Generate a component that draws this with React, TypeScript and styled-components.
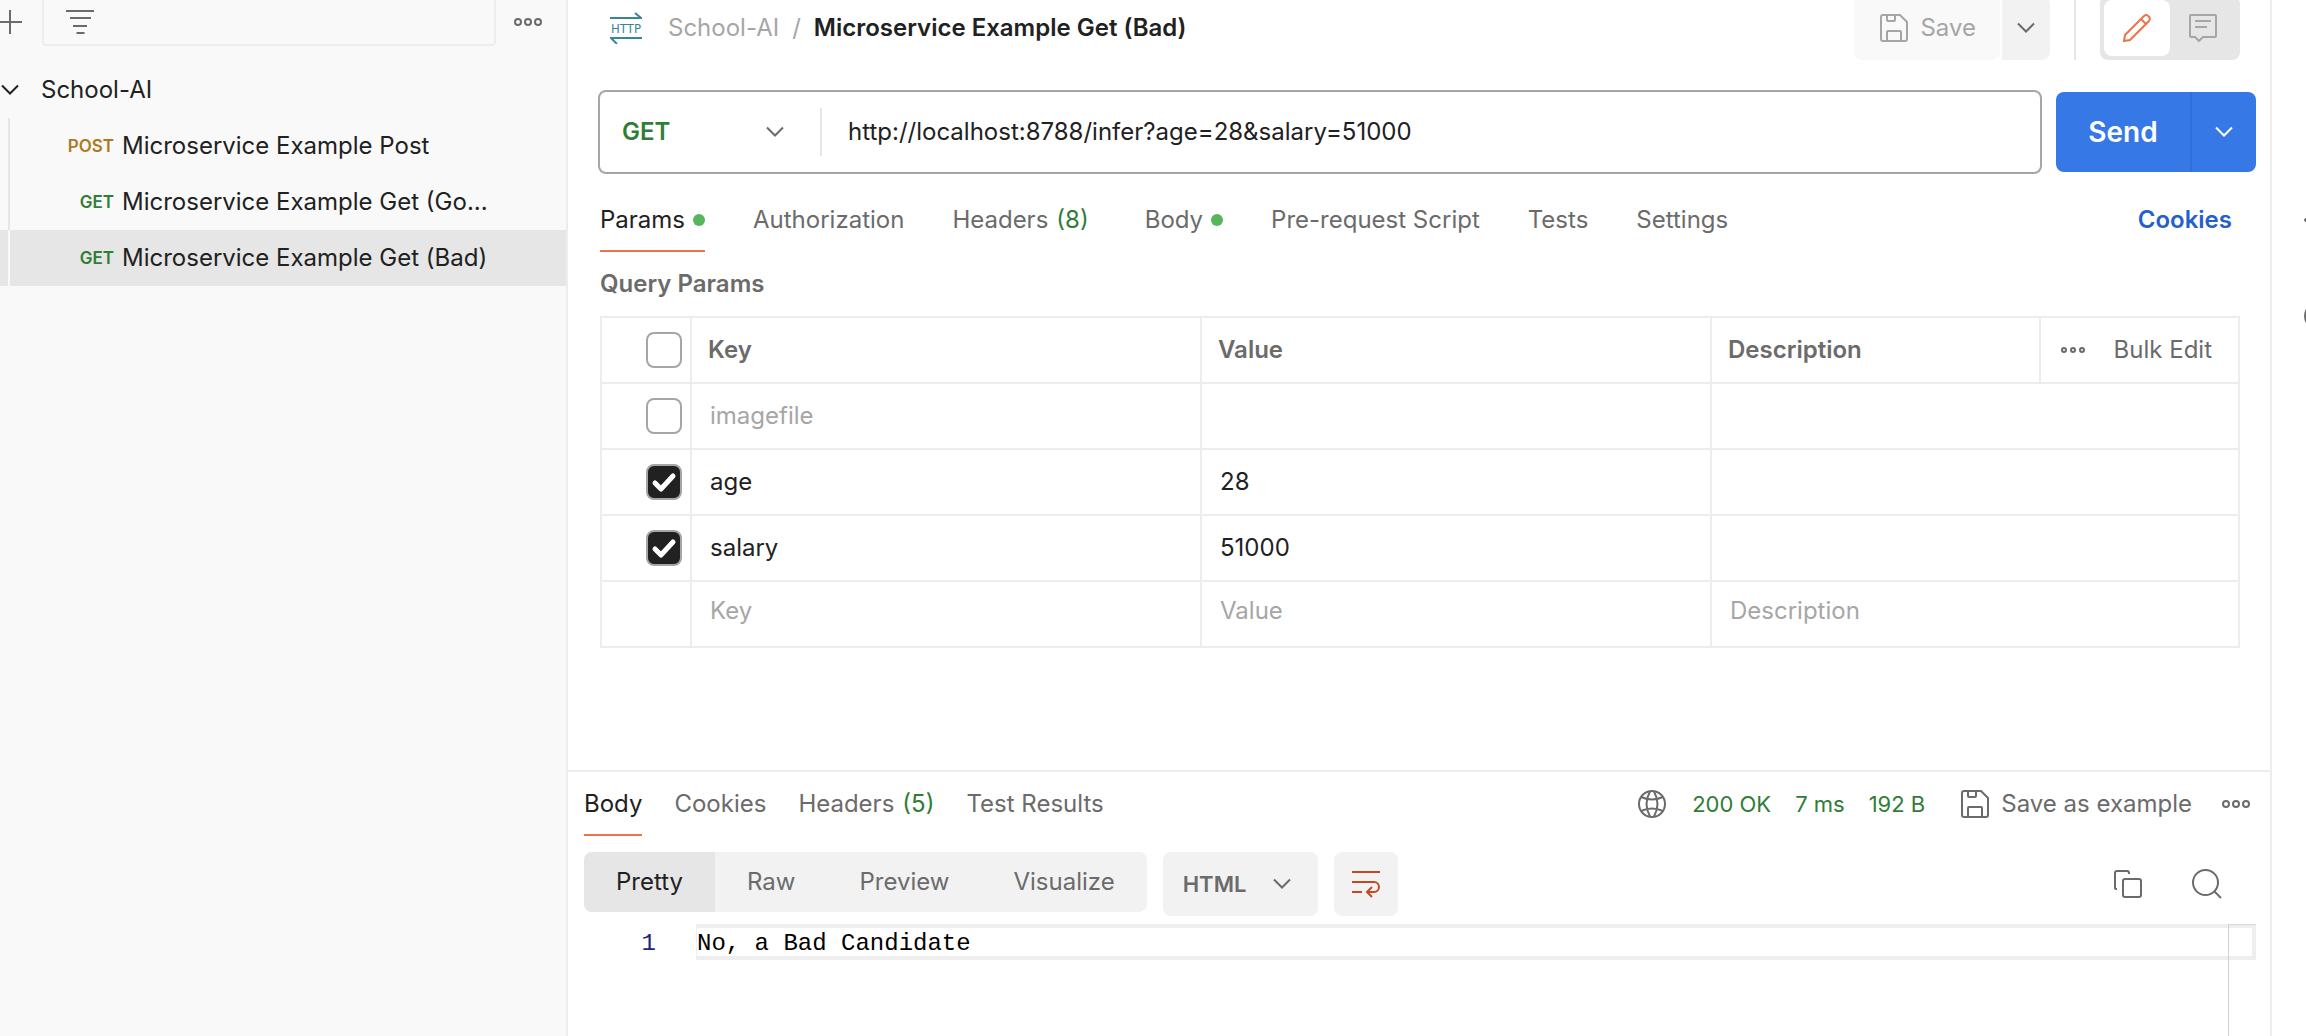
import React, { useState } from "react";
import styled, { createGlobalStyle } from "styled-components";

const color = {
  text: "#212121",
  muted: "#6b6b6b",
  faint: "#a6a6a6",
  line: "#ededed",
  panel: "#f9f9f9",
  soft: "#f2f2f2",
  selected: "#e6e6e6",
  green: "#2f7d36",
  dot: "#56b65c",
  amber: "#ad7a22",
  orange: "#eb7349",
  blue: "#3678e5",
  link: "#265fcb",
};

const GlobalStyle = createGlobalStyle`
  *, *::before, *::after { box-sizing: border-box; }
  body {
    margin: 0;
    background: #fff;
    color: ${color.text};
    font-family: Inter, "Liberation Sans", sans-serif;
    font-size: 24px;
    line-height: 32px;
  }
  button, input, select { font: inherit; color: inherit; }
  button { margin: 0; padding: 0; border: 0; background: none; cursor: pointer; white-space: nowrap; }
  h2 { margin: 0; font-size: inherit; }
`;

/* ---------- icons ---------- */

const Svg = styled.svg`
  display: block;
  flex: none;
  fill: none;
  stroke: currentColor;
  stroke-width: 2;
`;

const Chevron = () => (
  <Svg width="18" height="12" viewBox="0 0 18 12"><path d="M1 1.5l8 8 8-8" /></Svg>
);

const Dots = ({ small = false }: { small?: boolean }) => (
  <Svg width={small ? 24 : 28} height="10" viewBox={small ? "0 0 24 10" : "0 0 28 10"}>
    {(small ? [3, 12, 21] : [4, 14, 24]).map((x) => (
      <circle key={x} cx={x} cy="5" r={small ? 2 : 3} />
    ))}
  </Svg>
);

const PlusIcon = () => (
  <Svg width="24" height="24" viewBox="0 0 24 24"><path d="M12 0v24M0 12h24" /></Svg>
);

const FilterIcon = () => (
  <Svg width="28" height="24" viewBox="0 0 28 24"><path d="M0 1h28M4 8h21M7 16h14M10.500 23h8" /></Svg>
);

const HttpIcon = () => (
  <Svg width="32" height="32" viewBox="0 0 32 32">
    <path d="M0 6h31l-6-5M32 26H1l6 6" />
    <text
      x="16"
      y="21"
      textAnchor="middle"
      fontSize="13"
      fontFamily="'DejaVu Sans Condensed', 'Liberation Sans Narrow', sans-serif"
      fill="currentColor"
      stroke="none"
    >
      HTTP
    </text>
  </Svg>
);

const SaveIcon = () => (
  <Svg width="28" height="28" viewBox="0 0 28 28">
    <path d="M3 1h17l7 7v17a2 2 0 0 1-2 2H3a2 2 0 0 1-2-2V3a2 2 0 0 1 2-2z" />
    <path d="M7 1v5q0 1 1 1h6q1 0 1-1V1M7 27V18q0-1 1-1h12q1 0 1 1v9" />
  </Svg>
);

const PencilIcon = () => (
  <Svg width="28" height="28" viewBox="0 0 28 28">
    <path d="M1 27l1-6L21 2q2.500-2 4.600.300 2.200 2.200.400 4.700L7 26zM18 5l5 5" />
  </Svg>
);

const CommentIcon = () => (
  <Svg width="28" height="28" viewBox="0 0 28 28">
    <path d="M2 1h24q1 0 1 1v20q0 1-1 1H14l-4 4-4-4H2q-1 0-1-1V2q0-1 1-1zM6 7h16M6 13h12" />
  </Svg>
);

const GlobeIcon = () => (
  <Svg width="28" height="28" viewBox="0 0 28 28">
    <circle cx="14" cy="14" r="13" />
    <path d="M12 1.500Q5 14 12 26.500M16 1.500Q23 14 16 26.500M3 7q11 5 22 0M3 21q11-5 22 0" />
  </Svg>
);

const WrapIcon = () => (
  <Svg width="28" height="28" viewBox="0 0 28 28">
    <path d="M0 2h28M0 12h22a5 5 0 0 1 0 10H15M20 17l-5 5 5 5M0 22h10" />
  </Svg>
);

const CopyIcon = () => (
  <Svg width="28" height="28" viewBox="0 0 28 28">
    <path d="M3 19H2q-1 0-1-1V3q0-2 2-2h10q2 0 2 2v1" />
    <rect x="9" y="9" width="18" height="18" rx="2" />
  </Svg>
);

const SearchIcon = () => (
  <Svg width="30" height="30" viewBox="0 0 30 30">
    <circle cx="13.500" cy="13.500" r="12.500" />
    <path d="M22 22l7 7" />
  </Svg>
);

/* ---------- shell ---------- */

const Shell = styled.div`
  display: flex;
  min-height: 100vh;
  overflow: hidden;
`;

const Sidebar = styled.aside`
  flex: none;
  width: 568px;
  background: ${color.panel};
  border-right: 2px solid ${color.line};
`;

const SidebarTools = styled.div`
  display: flex;
  align-items: flex-end;
  height: 46px;
  color: ${color.muted};
`;

const ToolButton = styled.button<{ $width: number; $shift?: boolean }>`
  display: flex;
  flex: none;
  align-items: center;
  justify-content: ${(p) => (p.$shift ? "flex-end" : "center")};
  width: ${(p) => p.$width}px;
  height: 48px;
  padding-right: ${(p) => (p.$shift ? 20 : 6)}px;
`;

const FilterBox = styled.label`
  display: flex;
  flex: 1;
  min-width: 0;
  align-items: center;
  gap: 12px;
  height: 52px;
  padding: 4px 22px 0;
  border: 2px solid ${color.line};
  border-radius: 4px;
`;

const FilterInput = styled.input`
  flex: 1;
  min-width: 0;
  border: 0;
  outline: 0;
  background: none;
`;

const Folder = styled.button`
  display: flex;
  align-items: center;
  gap: 22px;
  width: 100%;
  height: 56px;
  margin-top: 16px;
  padding-left: 1px;
  text-align: left;
`;

const RequestList = styled.nav`
  display: flex;
  flex-direction: column;
`;

const RequestLink = styled.a<{ $active?: boolean }>`
  display: flex;
  align-items: center;
  gap: 8px;
  height: 56px;
  padding-right: 76px;
  color: inherit;
  text-decoration: none;
  background: ${(p) => (p.$active ? color.selected : "none")};

  &::before {
    content: "";
    align-self: stretch;
    width: 2px;
    margin-left: 8px;
    background: ${(p) => (p.$active ? color.panel : color.selected)};
  }
`;

const Verb = styled.span<{ $post?: boolean }>`
  flex: none;
  width: 96px;
  text-align: right;
  font-size: 17px;
  font-weight: 600;
  color: ${(p) => (p.$post ? color.amber : color.green)};
`;

const RequestName = styled.span`
  overflow: hidden;
  text-overflow: ellipsis;
  white-space: nowrap;
`;

const Main = styled.main`
  display: flex;
  flex: 1;
  flex-direction: column;
  min-width: 0;
  border-right: 2px solid ${color.line};
`;

const RightRail = styled.aside`
  display: flex;
  flex: none;
  flex-direction: column;
  align-items: flex-start;
  gap: 74px;
  width: 34px;
  padding: 212px 0 0 32px;
  overflow: hidden;
  color: ${color.muted};
`;

/* ---------- request ---------- */

const TitleBar = styled.header`
  display: flex;
  align-items: center;
  height: 64px;
  margin-top: -4px;
  padding: 0 30px 0 42px;
`;

const Crumbs = styled.div`
  display: flex;
  flex: 1;
  align-items: center;
  gap: 13px;
  color: ${color.faint};

  svg { margin-right: 13px; color: #3b8496; }
`;

const Title = styled.strong`
  font-weight: 600;
  color: ${color.text};
`;

const SaveButton = styled.button`
  display: flex;
  align-items: center;
  gap: 12px;
  height: 64px;
  padding: 0 24px 0 26px;
  border-radius: 8px;
  background: ${color.panel};
  color: ${color.faint};
`;

const SaveMenu = styled.button`
  display: flex;
  align-items: center;
  justify-content: center;
  width: 48px;
  height: 64px;
  margin-left: 2px;
  border-radius: 0 8px 8px 0;
  background: ${color.soft};
  color: ${color.muted};
`;

const Divider = styled.span`
  width: 2px;
  height: 64px;
  margin: 0 24px;
  background: ${color.selected};
`;

const ModeSwitch = styled.div`
  display: flex;
  width: 140px;
  height: 64px;
  padding: 4px;
  border-radius: 8px;
  background: ${color.selected};
`;

const ModeButton = styled.button<{ $active?: boolean }>`
  display: flex;
  flex: 1;
  align-items: center;
  justify-content: center;
  border-radius: 8px;
  background: ${(p) => (p.$active ? "#fff" : "none")};
  color: ${(p) => (p.$active ? color.orange : color.faint)};
`;

const UrlRow = styled.div`
  display: flex;
  align-items: center;
  gap: 14px;
  margin-top: 30px;
  padding: 0 14px 0 30px;
`;

const UrlBox = styled.div`
  display: flex;
  flex: 1;
  align-items: center;
  height: 84px;
  min-width: 0;
  border: 2px solid ${color.faint};
  border-radius: 8px;
`;

const SelectWrap = styled.div`
  display: flex;
  position: relative;
  align-items: center;
  color: ${color.muted};

  svg { position: absolute; right: 38px; pointer-events: none; }
`;

const MethodSelect = styled.select`
  appearance: none;
  width: 222px;
  height: 48px;
  padding: 0 22px;
  border: 0;
  border-right: 2px solid ${color.selected};
  outline: 0;
  background: none;
  color: ${color.green};
  font-weight: 600;
`;

const UrlInput = styled.input`
  flex: 1;
  min-width: 0;
  padding: 0 26px;
  border: 0;
  outline: 0;
  background: none;
`;

const SendGroup = styled.div`
  display: flex;
  height: 80px;
  border-radius: 8px;
  overflow: hidden;
  background: ${color.blue};
  color: #fff;
`;

const SendButton = styled.button`
  width: 134px;
  font-size: 28px;
  font-weight: 600;
`;

const SendMenu = styled.button`
  display: flex;
  align-items: center;
  justify-content: center;
  width: 66px;
  border-left: 2px solid #306fd8;
`;

const TabRow = styled.div<{ $response?: boolean }>`
  display: flex;
  align-items: center;
  gap: ${(p) => (p.$response ? 32 : 48)}px;
  height: 64px;
  margin-top: ${(p) => (p.$response ? 0 : 14)}px;
  padding: ${(p) => (p.$response ? "0 20px 0 16px" : "0 38px 0 32px")};
`;

const Tab = styled.button<{ $active?: boolean }>`
  display: flex;
  align-items: center;
  align-self: stretch;
  gap: 8px;
  padding-top: 2px;
  border-bottom: 2px solid ${(p) => (p.$active ? color.orange : "transparent")};
  color: ${(p) => (p.$active ? color.text : color.muted)};
`;

const Count = styled.span<{ $wide?: boolean }>`
  margin-right: ${(p) => (p.$wide ? 8 : 0)}px;
  color: ${color.green};
`;

const Dot = styled.i`
  width: 12px;
  height: 12px;
  border-radius: 50%;
  background: ${color.dot};
`;

const CookiesLink = styled.a`
  margin-left: auto;
  color: ${color.link};
  font-weight: 600;
  text-decoration: none;
`;

const Params = styled.section`
  flex: none;
  padding: 16px 30px 122px 32px;
`;

const ParamsTitle = styled.h2`
  margin-bottom: 16px;
  font-weight: 600;
  color: ${color.muted};
`;

const ParamTable = styled.table`
  width: 100%;
  table-layout: fixed;
  border-collapse: separate;
  border-spacing: 0;
  border-top: 2px solid ${color.line};
  border-left: 2px solid ${color.line};

  th, td {
    height: 66px;
    padding: 0 16px;
    border-right: 2px solid ${color.line};
    border-bottom: 2px solid ${color.line};
    text-align: left;
    white-space: nowrap;
  }
  th { color: ${color.muted}; font-weight: 600; }
`;

const CheckCell = styled.td`
  && { padding: 0 0 0 44px; }
`;

const Check = styled.input`
  display: block;
  appearance: none;
  width: 36px;
  height: 36px;
  margin: 0;
  border: 2px solid ${color.faint};
  border-radius: 8px;
  background: #fff center / 28px 28px no-repeat;

  &:checked {
    background-color: ${color.text};
    background-image: url("data:image/svg+xml,%3Csvg xmlns='http://www.w3.org/2000/svg' viewBox='0 0 28 28' fill='none' stroke='white' stroke-width='5' stroke-linecap='round' stroke-linejoin='round'%3E%3Cpath d='M5 15l6 6L23 8'/%3E%3C/svg%3E");
  }
`;

const CellInput = styled.input<{ $off?: boolean }>`
  display: block;
  width: 100%;
  height: 32px;
  padding: 0 2px;
  border: 0;
  outline: 0;
  background: none;
  color: ${(p) => (p.$off ? color.faint : color.text)};

  &::placeholder { color: ${color.faint}; opacity: 1; }
`;

const BlankRow = styled.tr`
  td { padding-bottom: 6px; }
`;

const BulkTools = styled.div`
  display: flex;
  align-items: center;
  justify-content: space-between;
  padding: 0 10px 0 4px;
  font-weight: 400;
`;

/* ---------- response ---------- */

const Response = styled.section`
  display: flex;
  flex: 1;
  flex-direction: column;
  border-top: 2px solid ${color.line};
`;

const Status = styled.div`
  display: flex;
  align-items: center;
  gap: 24px;
  margin-left: auto;
  color: ${color.green};
  font-size: 22px;

  svg { color: ${color.muted}; }
  > svg { margin-right: 2px; }
`;

const SaveExample = styled.button`
  display: flex;
  align-items: center;
  gap: 12px;
  margin-left: 12px;
  margin-right: 6px;
  color: ${color.muted};
  font-size: 24px;
`;

const ViewBar = styled.div`
  display: flex;
  align-items: flex-start;
  gap: 16px;
  padding: 16px 48px 8px 16px;
`;

const Segments = styled.div`
  display: flex;
  height: 60px;
  border-radius: 8px;
  overflow: hidden;
  background: ${color.soft};
`;

const Segment = styled.button<{ $active?: boolean }>`
  padding: 0 32px;
  background: ${(p) => (p.$active ? color.selected : "none")};
  color: ${(p) => (p.$active ? color.text : color.muted)};
`;

const FormatWrap = styled(SelectWrap)`
  svg { right: 27px; }
`;

const FormatSelect = styled.select`
  appearance: none;
  width: 155px;
  height: 64px;
  padding: 0 20px;
  border: 0;
  border-radius: 8px;
  outline: 0;
  background: ${color.soft};
  color: ${color.muted};
  font-size: 22px;
  font-weight: 600;
`;

const WrapButton = styled.button`
  display: flex;
  align-items: center;
  justify-content: center;
  width: 64px;
  height: 64px;
  border-radius: 8px;
  background: ${color.soft};
  color: #c04a22;
`;

const ViewTools = styled.div`
  display: flex;
  align-items: center;
  gap: 50px;
  height: 64px;
  margin-left: auto;
  color: ${color.muted};
`;

const Editor = styled.div`
  display: flex;
  flex: 1;
  padding-right: 14px;
  font-family: "Liberation Mono", monospace;
  line-height: 36px;
`;

const Gutter = styled.div`
  width: 88px;
  margin-right: 40px;
  padding-top: 2px;
  text-align: right;
  color: #1c2674;
`;

const Code = styled.div`
  position: relative;
  flex: 1;

  /* scroll ruler drawn over the right end of the text area */
  &::after {
    content: "";
    position: absolute;
    inset: 0 0 0 auto;
    width: 28px;
    border-top: 1px solid #d8d8d8;
    border-left: 1px solid #d0d0d0;
  }
`;

const CodeLine = styled.pre`
  height: 36px;
  margin: 0;
  padding-top: 2px;
  border: 4px solid #eee;
  border-left-width: 1px;
  color: #000;
  font: inherit;
  line-height: 28px;
`;

const requests = [
  { verb: "POST", name: "Microservice Example Post" },
  { verb: "GET", name: "Microservice Example Get (Go..." },
  { verb: "GET", name: "Microservice Example Get (Bad)" },
];

const initialParams = [
  { on: false, key: "imagefile", value: "" },
  { on: true, key: "age", value: "28" },
  { on: true, key: "salary", value: "51000" },
];

export default function App() {
  const [params, setParams] = useState(initialParams);
  const [view, setView] = useState("Pretty");

  const setRow = (i: number, on: boolean) =>
    setParams(params.map((p, n) => (n === i ? { ...p, on } : p)));

  return (
    <>
      <GlobalStyle />
      <Shell>
        <Sidebar>
          <SidebarTools>
            <ToolButton $width={42} $shift aria-label="New"><PlusIcon /></ToolButton>
            <FilterBox>
              <FilterIcon />
              <FilterInput aria-label="Filter collections" />
            </FilterBox>
            <ToolButton $width={70} aria-label="More"><Dots /></ToolButton>
          </SidebarTools>
          <Folder><Chevron />School-AI</Folder>
          <RequestList>
            {requests.map((r, i) => (
              <RequestLink key={r.name} href="#" $active={i === 2}>
                <Verb $post={r.verb === "POST"}>{r.verb}</Verb>
                <RequestName>{r.name}</RequestName>
              </RequestLink>
            ))}
          </RequestList>
        </Sidebar>

        <Main>
          <TitleBar>
            <Crumbs>
              <HttpIcon />
              <span>School-AI</span>
              <span>/</span>
              <Title>Microservice Example Get (Bad)</Title>
            </Crumbs>
            <SaveButton><SaveIcon />Save</SaveButton>
            <SaveMenu aria-label="Save options"><Chevron /></SaveMenu>
            <Divider />
            <ModeSwitch>
              <ModeButton $active aria-label="Edit"><PencilIcon /></ModeButton>
              <ModeButton aria-label="Comments"><CommentIcon /></ModeButton>
            </ModeSwitch>
          </TitleBar>

          <UrlRow>
            <UrlBox>
              <SelectWrap>
                <MethodSelect aria-label="Method"><option>GET</option><option>POST</option></MethodSelect>
                <Chevron />
              </SelectWrap>
              <UrlInput aria-label="Request URL" defaultValue="http://localhost:8788/infer?age=28&salary=51000" />
            </UrlBox>
            <SendGroup>
              <SendButton>Send</SendButton>
              <SendMenu aria-label="Send options"><Chevron /></SendMenu>
            </SendGroup>
          </UrlRow>

          <TabRow>
            <Tab $active>Params<Dot /></Tab>
            <Tab>Authorization</Tab>
            <Tab>Headers<Count $wide>(8)</Count></Tab>
            <Tab>Body<Dot /></Tab>
            <Tab>Pre-request Script</Tab>
            <Tab>Tests</Tab>
            <Tab>Settings</Tab>
            <CookiesLink href="#">Cookies</CookiesLink>
          </TabRow>

          <Params>
            <ParamsTitle>Query Params</ParamsTitle>
            <ParamTable>
              <colgroup>
                <col style={{ width: 90 }} />
                <col />
                <col />
                <col style={{ width: 329 }} />
                <col style={{ width: 199 }} />
              </colgroup>
              <thead>
                <tr>
                  <CheckCell><Check type="checkbox" aria-label="Select all" /></CheckCell>
                  <th>Key</th>
                  <th>Value</th>
                  <th>Description</th>
                  <th>
                    <BulkTools>
                      <button aria-label="Columns"><Dots small /></button>
                      <button>Bulk Edit</button>
                    </BulkTools>
                  </th>
                </tr>
              </thead>
              <tbody>
                {params.map((p, i) => (
                  <tr key={p.key}>
                    <CheckCell>
                      <Check
                        type="checkbox"
                        aria-label={p.key}
                        checked={p.on}
                        onChange={(e) => setRow(i, e.target.checked)}
                      />
                    </CheckCell>
                    <td><CellInput aria-label="Key" $off={!p.on} defaultValue={p.key} /></td>
                    <td><CellInput aria-label="Value" $off={!p.on} defaultValue={p.value} /></td>
                    <td colSpan={2}><CellInput aria-label="Description" /></td>
                  </tr>
                ))}
                <BlankRow>
                  <td />
                  <td><CellInput aria-label="New key" placeholder="Key" /></td>
                  <td><CellInput aria-label="New value" placeholder="Value" /></td>
                  <td colSpan={2}><CellInput aria-label="New description" placeholder="Description" /></td>
                </BlankRow>
              </tbody>
            </ParamTable>
          </Params>

          <Response>
            <TabRow $response>
              <Tab $active>Body</Tab>
              <Tab>Cookies</Tab>
              <Tab>Headers<Count>(5)</Count></Tab>
              <Tab>Test Results</Tab>
              <Status>
                <GlobeIcon />
                <span>200 OK</span>
                <span>7 ms</span>
                <span>192 B</span>
                <SaveExample><SaveIcon />Save as example</SaveExample>
                <button aria-label="More response actions"><Dots /></button>
              </Status>
            </TabRow>
            <ViewBar>
              <Segments>
                {["Pretty", "Raw", "Preview", "Visualize"].map((v) => (
                  <Segment key={v} $active={v === view} onClick={() => setView(v)}>{v}</Segment>
                ))}
              </Segments>
              <FormatWrap>
                <FormatSelect aria-label="Format"><option>HTML</option><option>JSON</option></FormatSelect>
                <Chevron />
              </FormatWrap>
              <WrapButton aria-label="Wrap lines"><WrapIcon /></WrapButton>
              <ViewTools>
                <button aria-label="Copy"><CopyIcon /></button>
                <button aria-label="Search"><SearchIcon /></button>
              </ViewTools>
            </ViewBar>
            <Editor>
              <Gutter>1</Gutter>
              <Code><CodeLine>No, a Bad Candidate</CodeLine></Code>
            </Editor>
          </Response>
        </Main>

        <RightRail>
          <Svg width="16" height="16" viewBox="0 0 16 16"><path d="M8 1L1 8l7 7" /></Svg>
          <Svg width="28" height="28" viewBox="0 0 28 28"><circle cx="14" cy="14" r="13" /></Svg>
        </RightRail>
      </Shell>
    </>
  );
}
